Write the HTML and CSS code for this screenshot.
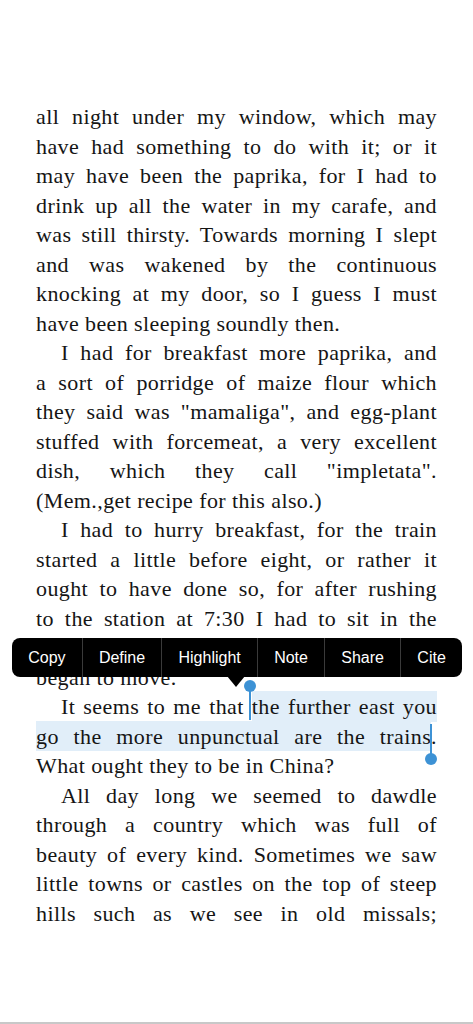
FILE: index.html
```html
<!DOCTYPE html>
<html lang="en">
<head>
<meta charset="utf-8">
<title>Reader</title>
<link rel="stylesheet" href="styles.css">
</head>
<body>
<div class="screen">
  <main class="page">
    <p class="para">
      <span class="ln">all night under my window, which may</span>
      <span class="ln">have had something to do with it; or it</span>
      <span class="ln">may have been the paprika, for I had to</span>
      <span class="ln">drink up all the water in my carafe, and</span>
      <span class="ln">was still thirsty. Towards morning I slept</span>
      <span class="ln">and was wakened by the continuous</span>
      <span class="ln">knocking at my door, so I guess I must</span>
      <span class="ln end">have been sleeping soundly then.</span>
    </p>
    <p class="para">
      <span class="ln first">I had for breakfast more paprika, and</span>
      <span class="ln">a sort of porridge of maize flour which</span>
      <span class="ln">they said was "mamaliga", and egg-plant</span>
      <span class="ln">stuffed with forcemeat, a very excellent</span>
      <span class="ln">dish, which they call "impletata".</span>
      <span class="ln end">(Mem.,get recipe for this also.)</span>
    </p>
    <p class="para">
      <span class="ln first">I had to hurry breakfast, for the train</span>
      <span class="ln">started a little before eight, or rather it</span>
      <span class="ln">ought to have done so, for after rushing</span>
      <span class="ln">to the station at 7:30 I had to sit in the</span>
      <span class="ln">carriage for more than an hour before we</span>
      <span class="ln end">began to move.</span>
    </p>
    <p class="para">
      <span class="ln first">It seems to me that <span class="sel sel-start">the further east you</span></span>
      <span class="ln"><span class="sel sel-end">go the more unpunctual are the trains</span>.</span>
      <span class="ln end">What ought they to be in China?</span>
    </p>
    <p class="para">
      <span class="ln first">All day long we seemed to dawdle</span>
      <span class="ln">through a country which was full of</span>
      <span class="ln">beauty of every kind. Sometimes we saw</span>
      <span class="ln">little towns or castles on the top of steep</span>
      <span class="ln">hills such as we see in old missals;</span>
    </p>
  </main>
  <div class="bottom-rule"></div>

  <nav class="menu">
    <span class="menu-item">Copy</span>
    <span class="menu-item">Define</span>
    <span class="menu-item">Highlight</span>
    <span class="menu-item">Note</span>
    <span class="menu-item">Share</span>
    <span class="menu-item">Cite</span>
  </nav>
</div>
</body>
</html>
```
FILE: styles.css
```css
* { box-sizing: border-box; }
html, body {
  margin: 0;
  padding: 0;
  background: #ffffff;
}
.screen {
  position: relative;
  width: 473px;
  height: 1024px;
  display: flex;
  flex-direction: column;
  overflow: hidden;
}
.page {
  flex: 1;
  padding: 102px 36px 0 36px;
  font-family: "Liberation Serif", "Times New Roman", serif;
  font-size: 22px;
  letter-spacing: 0.4px;
  line-height: 29.5px;
  color: #151515;
}
.para {
  margin: 0;
}
.ln {
  display: block;
  text-align: justify;
  text-align-last: justify;
}
.ln.first {
  padding-left: 25px;
}
.ln.end {
  text-align-last: left;
}
.sel {
  background: #e1eef9;
  padding: 2.6px 0;
  position: relative;
}
.sel-start::before {
  content: "";
  position: absolute;
  left: -3px;
  top: -3px;
  width: 2px;
  height: 32px;
  background: #3d92d5;
}
.sel-start::after {
  content: "";
  position: absolute;
  left: -8px;
  top: -11px;
  width: 12px;
  height: 12px;
  border-radius: 50%;
  background: #3d92d5;
}
.sel-end::before {
  content: "";
  position: absolute;
  right: -1px;
  top: 3px;
  width: 2px;
  height: 32px;
  background: #3d92d5;
}
.sel-end::after {
  content: "";
  position: absolute;
  right: -6px;
  top: 32px;
  width: 12px;
  height: 12px;
  border-radius: 50%;
  background: #3d92d5;
}
.bottom-rule {
  height: 2px;
  background: #c8c8c8;
  flex: none;
}
.menu {
  position: absolute;
  left: 12px;
  top: 638px;
  width: 450px;
  height: 39px;
  background: #000000;
  border-radius: 8px;
  display: flex;
  align-items: stretch;
  font-family: "Liberation Sans", Arial, sans-serif;
  font-size: 16px;
  color: #ffffff;
}
.menu::after {
  content: "";
  position: absolute;
  left: 215px;
  top: 38px;
  width: 0;
  height: 0;
  border-left: 9px solid transparent;
  border-right: 9px solid transparent;
  border-top: 11px solid #000000;
}
.menu-item {
  flex: 1 1 auto;
  display: flex;
  align-items: center;
  justify-content: center;
  padding: 0 15px;
  border-left: 1px solid #3a3a3a;
  white-space: nowrap;
}
.menu-item:first-child {
  border-left: none;
}
```
